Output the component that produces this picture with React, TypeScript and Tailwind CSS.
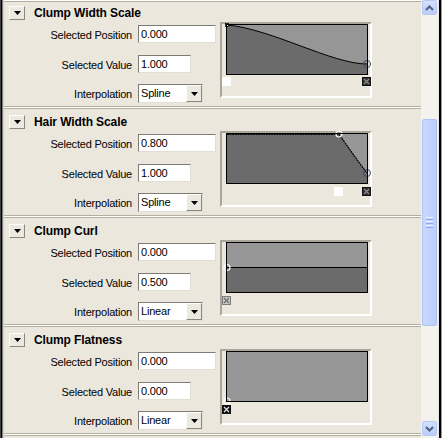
import type { ReactNode } from 'react';

const LIGHT = '#969696';
const DARK = '#6b6b6b';
const RING = '#3c4a6a';

function Field({ width, value }: { width: string; value: string }) {
  return (
    <div
      className={`${width} h-[18px] bg-white border border-t-[#7d7b74] border-l-[#7d7b74] border-r-[#e2ded3] border-b-[#e2ded3] pl-[2px] text-[11px] leading-[16px] tracking-[-0.2px]`}
    >
      {value}
    </div>
  );
}

function DownTri({ w, h }: { w: number; h: number }) {
  return (
    <svg width={w} height={h} viewBox={`0 0 ${w} ${h}`}>
      <polygon points={`0,0 ${w},0 ${w / 2},${h}`} fill="#000" />
    </svg>
  );
}

function Dropdown({ value }: { value: string }) {
  return (
    <div className="w-[65px] h-[19px] bg-white border border-t-[#7d7b74] border-l-[#7d7b74] border-r-[#e2ded3] border-b-[#e2ded3] flex items-stretch">
      <div className="flex-1 pl-[2px] text-[11px] leading-[17px] tracking-[-0.2px]">{value}</div>
      <div className="w-[16px] bg-[#ece9e0] border border-t-[#ffffff] border-l-[#ffffff] border-r-[#8a877d] border-b-[#8a877d] flex items-center justify-center">
        <DownTri w={7} h={4} />
      </div>
    </div>
  );
}

function Row({ label, children }: { label: string; children: ReactNode }) {
  return (
    <div className="flex items-center">
      <div className="w-[128px] text-right text-[11px] tracking-[-0.2px] pt-[2px]">{label}</div>
      <div className="ml-[6px]">{children}</div>
    </div>
  );
}

function Marker({ x, y, kind }: { x: number; y: number; kind: 'white' | 'dark' | 'grey' | 'black' }) {
  if (kind === 'white') return <rect x={x} y={y} width={9} height={9} fill="#ffffff" />;
  const fill = kind === 'dark' ? '#2e2e2e' : kind === 'grey' ? '#c9c7c0' : '#0c0c0c';
  const edge = kind === 'grey' ? '#7c7c7c' : '#111111';
  const cross = kind === 'dark' ? '#8a8a8a' : kind === 'grey' ? '#6e6e6e' : '#e6e6e6';
  return (
    <g>
      <rect x={x + 0.5} y={y + 0.5} width={8} height={8} fill={fill} stroke={edge} />
      <path d={`M${x + 2},${y + 2} L${x + 7},${y + 7} M${x + 7},${y + 2} L${x + 2},${y + 7}`} stroke={cross} strokeWidth={1.2} />
    </g>
  );
}

function Graph({ children }: { children: ReactNode }) {
  return (
    <div className="w-[152px] h-[76px] border-2 border-t-[#aaa699] border-l-[#aaa699] border-r-white border-b-white">
      <svg width={148} height={72} viewBox="0 0 148 72" className="overflow-visible">
        <rect x={4.5} y={0.5} width={141} height={50} fill={LIGHT} />
        {children}
        <rect x={4.5} y={0.5} width={141} height={50} fill="none" stroke="#000" />
      </svg>
    </div>
  );
}

function Section({
  title,
  pos,
  value,
  interp,
  graph,
  first = false,
}: {
  title: string;
  pos: string;
  value: string;
  interp: string;
  graph: ReactNode;
  first?: boolean;
}) {
  return (
    <div className="h-[109px] flex flex-col">
      <div className={first ? 'h-[2px] border-b border-[#b3ae9f] bg-white' : 'h-[2px]'} />
      <div className="h-[20px] pt-[1px] pl-[5px] flex items-center">
        <div className="w-[16px] h-[14px] bg-[#ece9e0] border border-t-white border-l-white border-r-[#8a877d] border-b-[#8a877d] flex items-center justify-center">
          <DownTri w={7} h={4} />
        </div>
        <div className="ml-[9px] text-[12px] font-bold leading-[14px] tracking-[-0.1px] pt-[1px]">{title}</div>
      </div>
      <div className="flex h-[84px]">
        <div className="w-[216px] pt-[3px] flex flex-col gap-[11px]">
          <Row label="Selected Position">
            <Field width="w-[78px]" value={pos} />
          </Row>
          <Row label="Selected Value">
            <Field width="w-[53px]" value={value} />
          </Row>
          <Row label="Interpolation">
            <Dropdown value={interp} />
          </Row>
        </div>
        {graph}
      </div>
      <div className="h-[3px] border-t border-b border-[#b3ae9f] bg-white" />
    </div>
  );
}

function ScrollButton({ up }: { up: boolean }) {
  return (
    <div className="w-[15px] h-[15px] rounded-[2px] border border-[#b7c9f3] bg-gradient-to-b from-[#d3e0fd] to-[#b9cdf9] flex items-center justify-center">
      <svg width={9} height={6} viewBox="0 0 9 6">
        <path d={up ? 'M1,5 L4.5,1.5 L8,5' : 'M1,1 L4.5,4.5 L8,1'} stroke="#4d6185" strokeWidth={2} fill="none" />
      </svg>
    </div>
  );
}

export default function App() {
  return (
    <div className="w-[442px] h-[438px] flex bg-[#ece7dc] text-black font-['Liberation_Sans',Arial,sans-serif] overflow-hidden">
      <div className="w-[4px] flex">
        <div className="w-[1px] bg-[#404040]" />
        <div className="w-[1px] bg-black" />
        <div className="w-[1px] bg-[#808080]" />
        <div className="w-[1px] bg-[#d6d1c4]" />
      </div>

      <div className="w-[417px] flex flex-col">
        <Section
          first
          title="Clump Width Scale"
          pos="0.000"
          value="1.000"
          interp="Spline"
          graph={
            <Graph>
              <path d="M5,1 C50,5 110,40 145,40 L145,50.5 L5,50.5 Z" fill={DARK} />
              <path d="M5,1 C50,5 110,40 145,40" fill="none" stroke="#000" />
              <rect x={3.5} y={-0.5} width={3} height={3} fill="#fff" stroke="#000" strokeWidth={0.8} />
              <circle cx={145} cy={40} r={3.5} fill="none" stroke={RING} />
              <Marker x={0} y={53} kind="white" />
              <Marker x={140} y={53} kind="dark" />
            </Graph>
          }
        />
        <Section
          title="Hair Width Scale"
          pos="0.800"
          value="1.000"
          interp="Spline"
          graph={
            <Graph>
              <path d="M5,1 L117,1 C124,11 137,30 145,40 L145,50.5 L5,50.5 Z" fill={DARK} />
              <path d="M5,1.5 L117,1.5 C124,11 137,30 145,40" fill="none" stroke="#000" strokeWidth={1.2} strokeDasharray="2 0.6" />
              <circle cx={117} cy={1} r={3} fill="none" stroke="#fff" strokeWidth={1.2} />
              <circle cx={145} cy={40} r={3.5} fill="none" stroke={RING} />
              <Marker x={112} y={54} kind="white" />
              <Marker x={140} y={54} kind="dark" />
            </Graph>
          }
        />
        <Section
          title="Clump Curl"
          pos="0.000"
          value="0.500"
          interp="Linear"
          graph={
            <Graph>
              <rect x={5} y={25} width={140} height={25.5} fill={DARK} />
              <path d="M5,25.5 L145,25.5" stroke="#000" />
              <circle cx={5} cy={25.5} r={3} fill="none" stroke="#fff" strokeWidth={1.2} />
              <Marker x={0} y={54} kind="grey" />
            </Graph>
          }
        />
        <Section
          title="Clump Flatness"
          pos="0.000"
          value="0.000"
          interp="Linear"
          graph={
            <Graph>
              <circle cx={5} cy={50} r={3} fill="none" stroke="#fff" strokeWidth={1.2} />
              <Marker x={0} y={54} kind="black" />
            </Graph>
          }
        />
      </div>

      <div className="w-[17px] bg-[#f3f2ed] flex flex-col pl-[1px] pr-[1px]">
        <ScrollButton up />
        <div className="h-[104px]" />
        <div className="w-[15px] h-[207px] rounded-[2px] border border-[#aec3f2] bg-gradient-to-r from-[#c9d8fd] to-[#bccffb] flex flex-col items-center justify-center gap-[1px]">
          <div className="w-[7px] h-[1px] bg-[#eef3fe]" />
          <div className="w-[7px] h-[1px] bg-[#8eaaf0]" />
          <div className="w-[7px] h-[1px] bg-[#eef3fe]" />
          <div className="w-[7px] h-[1px] bg-[#8eaaf0]" />
          <div className="w-[7px] h-[1px] bg-[#eef3fe]" />
          <div className="w-[7px] h-[1px] bg-[#8eaaf0]" />
        </div>
        <div className="flex-1" />
        <ScrollButton up={false} />
        <div className="h-[2px]" />
      </div>

      <div className="w-[4px] flex">
        <div className="w-[1px] bg-[#e6e6e6]" />
        <div className="w-[2px] bg-black" />
        <div className="w-[1px] bg-[#9a9a9a]" />
      </div>
    </div>
  );
}
